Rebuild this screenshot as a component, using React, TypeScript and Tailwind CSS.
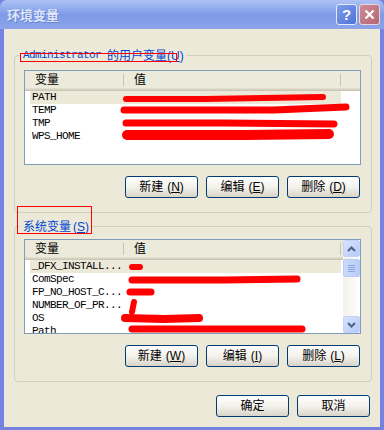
import type { ReactNode } from 'react'

type Scribble = { d: string; w: number }

const USER_ROWS = ['PATH', 'TEMP', 'TMP', 'WPS_HOME']
const SYS_ROWS = ['_DFX_INSTALL...', 'ComSpec', 'FP_NO_HOST_C...', 'NUMBER_OF_PR...', 'OS', 'Path']

// redaction strokes, coords relative to the list box
const USER_RED: Scribble[] = [
  { d: 'M102 29 L180 29 L299 27', w: 6 },
  { d: 'M100 40 L250 40 L322 37', w: 7 },
  { d: 'M102 53 L200 53 L310 54', w: 7 },
  { d: 'M103 65 L220 65 L305 64', w: 10 },
]
const SYS_RED: Scribble[] = [
  { d: 'M108 28 L116 28', w: 6 },
  { d: 'M108 41 L200 41 L273 40', w: 7 },
  { d: 'M106 53 L127 53', w: 7 },
  { d: 'M110 63 L108 73', w: 6 },
  { d: 'M101 79 L140 80 L175 79', w: 8 },
  { d: 'M108 90 L200 90 L278 90', w: 7 },
]

function XpButton({ label, hotkey }: { label: string; hotkey?: string }) {
  return (
    <button className="flex h-[22px] w-[73px] items-center justify-center rounded-[3px] border border-[#003C74] bg-gradient-to-b from-white via-[#F3F2EC] to-[#D9D4C8] text-[12px] leading-none text-black">
      <span>{label}</span>
      {hotkey && (
        <span className="ml-[4px]">
          (<span className="underline">{hotkey}</span>)
        </span>
      )}
    </button>
  )
}

function ScrollBtn({ up }: { up?: boolean }) {
  return (
    <div className="flex h-[17px] w-[17px] items-center justify-center rounded-[2px] border border-[#C3D3FD] bg-gradient-to-br from-[#D7E3FD] to-[#B6CAF7]">
      <svg width="9" height="6" viewBox="0 0 9 6">
        <path
          d={up ? 'M1 5 L4.5 1.5 L8 5' : 'M1 1 L4.5 4.5 L8 1'}
          fill="none"
          stroke="#4D6185"
          strokeWidth="2"
        />
      </svg>
    </div>
  )
}

function ListBox({ rows, red, scroll }: { rows: string[]; red: Scribble[]; scroll?: boolean }) {
  return (
    <div className="relative flex h-[95px] w-[337px] overflow-hidden border border-[#7F9DB9] bg-white">
      <div className="flex min-w-0 flex-1 flex-col">
        <div className="flex h-[20px] shrink-0 flex-col bg-[#EBEADB]">
          <div className="flex h-[17px] items-center text-[12px] text-black">
            <div className="flex w-[98px] items-center pl-[10px]">变量</div>
            <div className="h-[12px] w-px bg-[#C7C5B2]" />
            <div className="flex w-[216px] items-center pl-[10px]">值</div>
            <div className="h-[12px] w-px bg-[#C7C5B2]" />
          </div>
          <div className="h-px bg-[#E2DECD]" />
          <div className="h-px bg-[#D6D2C2]" />
          <div className="h-px bg-[#CBC7B8]" />
        </div>
        <div className="flex flex-col pl-[5px] font-['Liberation_Mono',monospace] text-[11px] tracking-[-0.6px] text-black">
          {rows.map((r, i) => (
            <div
              key={r}
              className={`flex h-[13px] w-[311px] shrink-0 items-center pl-[2px] ${i === 0 ? 'bg-[#ECE9D8]' : ''}`}
            >
              {r}
            </div>
          ))}
        </div>
      </div>
      {scroll && (
        <div className="flex w-[17px] shrink-0 flex-col bg-gradient-to-r from-[#F3F1EC] to-[#FEFEFB]">
          <ScrollBtn up />
          <div className="mt-[2px] flex h-[18px] w-[17px] flex-col items-center justify-center gap-[1px] rounded-[2px] border border-[#B8CBF5] bg-gradient-to-r from-[#CBDAFC] to-[#BACDF8]">
            <div className="h-px w-[7px] bg-[#8CA6E4]" />
            <div className="h-px w-[7px] bg-[#8CA6E4]" />
            <div className="h-px w-[7px] bg-[#8CA6E4]" />
            <div className="h-px w-[7px] bg-[#8CA6E4]" />
          </div>
          <div className="flex-1" />
          <ScrollBtn />
        </div>
      )}
      <svg className="pointer-events-none absolute left-[-1px] top-[-1px]" width="337" height="95">
        {red.map((s, i) => (
          <path key={i} d={s.d} fill="none" stroke="#FF0000" strokeWidth={s.w} strokeLinecap="round" strokeLinejoin="round" />
        ))}
      </svg>
    </div>
  )
}

function GroupBox({ label, mark, children, pt }: { label: ReactNode; mark: ReactNode; children: ReactNode; pt: string }) {
  return (
    <div className={`relative ml-[10px] w-[358px] rounded-[4px] border border-[#D0D0BF] pb-[14px] pl-[9px] ${pt}`}>
      <span className="absolute left-[5px] top-[-8px] flex h-[15px] items-center bg-[#ECE9D8] px-[3px] text-[12px] leading-none text-[#0046D5]">
        {label}
      </span>
      {mark}
      {children}
    </div>
  )
}

export default function App() {
  return (
    <div className="flex h-[430px] w-[384px] flex-col overflow-hidden bg-[#7482E2] font-['Liberation_Sans','Noto_Sans_CJK_SC',sans-serif]">
      {/* title bar */}
      <div className="flex h-[29px] shrink-0 items-center rounded-t-[7px] bg-gradient-to-b from-[#AFC2F4] via-[#7F9BE7] to-[#8BA4EA] pl-[7px] pr-[4px]">
        <span className="font-['Noto_Sans_CJK_SC',sans-serif] text-[13px] font-bold text-[#DCE5F9] [text-shadow:1px_1px_0_#6A82CF]">
          环境变量
        </span>
        <div className="ml-auto flex gap-[2px]">
          <div className="flex h-[21px] w-[21px] items-center justify-center rounded-[3px] border border-[#E4EBFB] bg-gradient-to-br from-[#7F9DEB] to-[#4E72D8] text-[15px] font-bold leading-none text-white">
            ?
          </div>
          <div className="flex h-[21px] w-[21px] items-center justify-center rounded-[3px] border border-[#E9D6DB] bg-gradient-to-br from-[#CE8B96] to-[#B56775]">
            <svg width="11" height="11" viewBox="0 0 11 11">
              <path d="M1.5 1.5 L9.5 9.5 M9.5 1.5 L1.5 9.5" stroke="white" strokeWidth="2.2" />
            </svg>
          </div>
        </div>
      </div>

      {/* body */}
      <div className="flex flex-1 flex-col border-x-4 border-b-[3px] border-[#7482E2] bg-[#ECE9D8]">
        <div className="mt-[26px]">
          <GroupBox
            pt="pt-[14px]"
            label={
              <>
                <span className="font-['Liberation_Mono',monospace] text-[11px] tracking-[-0.6px]">Administrator</span>
                <span className="ml-[6px]">的用户变量</span>
                <span>
                  (<span className="underline">U</span>)
                </span>
              </>
            }
            mark={<div className="pointer-events-none absolute left-[5px] top-[-3px] h-[9px] w-[157px] border border-[#FF0000]" />}
          >
            <ListBox rows={USER_ROWS} red={USER_RED} />
            <div className="mt-[11px] flex w-[336px] justify-end gap-[8px]">
              <XpButton label="新建" hotkey="N" />
              <XpButton label="编辑" hotkey="E" />
              <XpButton label="删除" hotkey="D" />
            </div>
          </GroupBox>
        </div>

        <div className="mt-[13px]">
          <GroupBox
            pt="pt-[12px]"
            label={
              <>
                <span>系统变量</span>
                <span className="ml-[2px]">
                  (<span className="underline">S</span>)
                </span>
              </>
            }
            mark={<div className="pointer-events-none absolute left-[2px] top-[-21px] h-[28px] w-[75px] border border-[#FF0000]" />}
          >
            <ListBox rows={SYS_ROWS} red={SYS_RED} scroll />
            <div className="mt-[11px] flex w-[336px] justify-end gap-[8px]">
              <XpButton label="新建" hotkey="W" />
              <XpButton label="编辑" hotkey="I" />
              <XpButton label="删除" hotkey="L" />
            </div>
          </GroupBox>
        </div>

        <div className="mt-[13px] flex justify-end gap-[8px] pr-[10px]">
          <XpButton label="确定" />
          <XpButton label="取消" />
        </div>
      </div>
    </div>
  )
}
